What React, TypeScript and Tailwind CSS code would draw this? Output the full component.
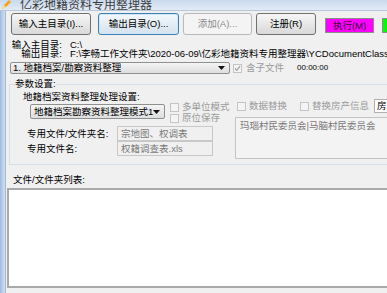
import React from "react";

type Kids = { children?: React.ReactNode; className?: string };

function Btn({ children, className = "" }: Kids) {
  return (
    <div
      className={`flex h-[22px] shrink-0 items-center justify-center whitespace-nowrap rounded-[3px] border leading-[10px] ${className}`}>
      {children}
    </div>
  );
}

function CheckBox({ checked = false }: { checked?: boolean }) {
  return (
    <span className="flex h-[9px] w-[9px] shrink-0 items-center justify-center border border-[#c4c4c4] bg-[#f4f4f4]">
      {checked && (
        <svg width="7" height="7" viewBox="0 0 7 7">
          <path d="M1 3.5 L2.8 5.4 L6 1.2" fill="none" stroke="#a0a0a0" strokeWidth="1.2" />
        </svg>
      )}
    </span>
  );
}

function Arrow() {
  return (
    <svg width="7" height="4" viewBox="0 0 7 4" className="shrink-0">
      <path d="M0 0 H7 L3.5 4 Z" fill="#111" />
    </svg>
  );
}

function Option({ label }: { label: string }) {
  return (
    <div className="flex items-center gap-[3px] whitespace-nowrap leading-[10px] text-[#9a9a9a]">
      <CheckBox />
      <span>{label}</span>
    </div>
  );
}

function Field({ label, value }: { label: string; value: string }) {
  return (
    <div className="flex h-[15px] items-center whitespace-nowrap">
      <span className="w-[94px] shrink-0 pl-[4px] leading-[10px]">{label}</span>
      <div className="flex h-[15px] w-[96px] items-center border border-[#c8c8c8] bg-[#f0f0f0] pl-[3px] leading-[10px] text-[#7a7a7a]">
        {value}
      </div>
    </div>
  );
}

export default function App() {
  return (
    <div className="flex h-[293px] w-[387px] flex-col overflow-hidden bg-[#f0f0f0] font-['Liberation_Sans','Noto_Sans_CJK_SC',sans-serif] text-[9.5px] text-black">
      {/* title bar, cut off at the top */}
      <div className="flex h-[10px] shrink-0 items-end gap-[9px] overflow-hidden bg-linear-to-b from-[#c9daee] to-[#e2ebf5] pl-[1px]">
        <svg width="10" height="10" viewBox="0 0 10 10" className="shrink-0">
          <path d="M1 9 L3 5 L8 0 L10 2 L5 7 Z" fill="#f2a31b" />
          <path d="M3 5 L5 7 L1 9 Z" fill="#fbe08a" />
        </svg>
        <span className="-mb-[2px] text-[12px] leading-[14px] text-[#3a3a3a]">亿彩地籍资料专用整理器</span>
      </div>

      <div className="flex flex-1 border-t border-[#b6c7db]">
        <div className="w-[5px] shrink-0 bg-linear-to-r from-[#9fbbe0] to-[#d3e1f1]" />
        <div className="flex flex-1 flex-col border-l border-[#a9b8c9]">
          {/* button row */}
          <div className="mt-[2px] flex items-start pl-[5px]">
            <Btn className="w-[80px] border-[#707070] bg-linear-to-b from-[#f6f6f6] to-[#d9d9d9]">输入主目录(I)...</Btn>
            <Btn className="ml-[7px] w-[81px] border-[#3c7fb1] bg-linear-to-b from-[#f3f8fc] to-[#d6e2ec] shadow-[inset_0_0_0_1px_#cfe8fa]">
              输出目录(O)...
            </Btn>
            <Btn className="ml-[4px] w-[69px] border-[#b5b9bc] bg-[#f4f4f4] text-[#8a8a8a]">添加(A)...</Btn>
            <Btn className="ml-[4px] w-[60px] border-[#707070] bg-linear-to-b from-[#f6f6f6] to-[#d9d9d9]">注册(R)</Btn>
            <div className="ml-[9px] mt-[5px] flex h-[15px] w-[49px] shrink-0 items-center justify-center whitespace-nowrap border border-[#8c8c8c] bg-[#ff00ff] leading-[10px] text-[#2a1a2a]">
              执行(M)
            </div>
            <div className="ml-[8px] mt-[5px] h-[15px] w-[40px] shrink-0 border border-[#8c8c8c] bg-[#00ff00]" />
          </div>

          {/* directories */}
          <div className="mt-[6px] flex whitespace-nowrap leading-[8px]">
            <span className="w-[56px] shrink-0 text-right">输入主目录:</span>
            <span className="ml-[8px]">C:\</span>
          </div>
          <div className="mt-[1px] flex whitespace-nowrap leading-[8px]">
            <span className="w-[56px] shrink-0 text-right">输出目录:</span>
            <span className="ml-[8px]">F:\李畅工作文件夹\2020-06-09\亿彩地籍资料专用整理器\YCDocumentClassFile</span>
          </div>

          {/* mode combo */}
          <div className="mt-[4px] flex items-center whitespace-nowrap">
            <div className="ml-[4px] flex h-[12px] w-[220px] items-center justify-between rounded-[2px] border border-[#8e8f8f] bg-linear-to-b from-[#f4f4f4] to-[#dedede] pl-[2px] pr-[4px] leading-[10px]">
              <span>1. 地籍档案/勘察资料整理</span>
              <Arrow />
            </div>
            <div className="ml-[3px] flex items-center gap-[4px] leading-[10px] text-[#9a9a9a]">
              <CheckBox checked />
              <span>含子文件</span>
            </div>
            <span className="ml-[13px] text-[8px] leading-[10px]">00:00:00</span>
          </div>

          {/* parameter group */}
          <fieldset className="ml-[3px] mt-[5px] border border-r-0 border-[#d5dfe5] pb-[5px]">
            <legend className="ml-[5px] leading-[10px]">参数设置:</legend>
            <div className="mt-[3px] flex pl-[13px]">
              <div className="flex w-[209px] shrink-0 flex-col">
                <span className="whitespace-nowrap leading-[10px]">地籍档案资料整理处理设置:</span>
                <div className="flex items-start">
                  <div className="ml-[7px] mt-[2px] flex h-[15px] w-[135px] shrink-0 items-center justify-between whitespace-nowrap rounded-[2px] border border-[#8e8f8f] bg-linear-to-b from-[#f4f4f4] to-[#dedede] pl-[3px] pr-[5px] leading-[10px]">
                    <span>地籍档案勘察资料整理模式1</span>
                    <Arrow />
                  </div>
                  <div className="ml-[5px] flex flex-col gap-[1px]">
                    <Option label="多单位模式" />
                    <Option label="原位保存" />
                  </div>
                </div>
                <div className="mt-[3px] flex flex-col">
                  <Field label="专用文件/文件夹名:" value="宗地图、权调表" />
                  <Field label="专用文件名:" value="权籍调查表.xls" />
                </div>
              </div>

              <div className="ml-[3px] flex flex-1 flex-col">
                <div className="mt-[7px] flex items-center">
                  <div className="ml-[2px]">
                    <Option label="数据替换" />
                  </div>
                  <div className="ml-[13px]">
                    <Option label="替换房产信息" />
                  </div>
                  <div className="ml-[5px] flex h-[14px] flex-1 items-center whitespace-nowrap border border-[#b0b0b0] bg-white pl-[2px] leading-[10px]">
                    房产
                  </div>
                </div>
                <div className="mt-[4px] h-[42px] whitespace-nowrap border border-[#c4c4c4] bg-[#f3f3f3] pl-[4px] pt-[3px] leading-[10px] text-[#777777]">
                  玛瑙村民委员会|马脑村民委员会
                </div>
              </div>
            </div>
          </fieldset>

          {/* file list */}
          <span className="ml-[7px] mt-[10px] whitespace-nowrap leading-[10px]">文件/文件夹列表:</span>
          <div className="ml-[1px] mt-[3px] h-[100px] border-2 border-[#a9a9a9] bg-white" />
        </div>
      </div>
    </div>
  );
}
